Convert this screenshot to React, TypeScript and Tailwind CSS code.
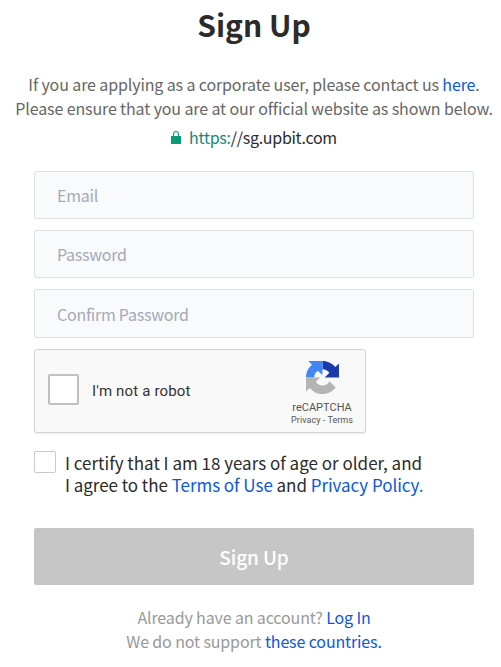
import type { ReactNode } from 'react'

const inputs = [
  { name: 'email', type: 'email', label: 'Email', size: 'h-12' },
  { name: 'password', type: 'password', label: 'Password', size: 'h-12' },
  { name: 'confirm', type: 'password', label: 'Confirm Password', size: 'h-[49px]' },
]

function TextLink({ children }: { children: ReactNode }) {
  return (
    <a href="#" className="text-[#0b57df]">
      {children}
    </a>
  )
}

function LockIcon() {
  return (
    <svg className="h-[13px] w-[10px]" viewBox="0 0 10 13" fill="none">
      <path d="M2.5 6V3a2.5 2.5 0 0 1 5 0v3" stroke="#089b78" strokeWidth="1.1" />
      <rect y="5" width="10" height="8" rx="0.5" fill="#089b78" />
    </svg>
  )
}

function RecaptchaLogo() {
  return (
    <svg className="h-[33px] w-[33px]" viewBox="0 0 64 64">
      <path fill="#1c3aa9" d="M64 31.955a33 33 0 0 0-.038-1.367V4.615l-7.18 7.18C50.905 4.602 41.965 0 31.949 0v15.926a17 17 0 0 1 13.345 6.993l-9.036 9.036H64z" />
      <path fill="#4285f4" d="M31.862.001a33 33 0 0 0-1.367.037H4.522l7.18 7.18C4.509 13.095 0 22.035 0 32.051h15.833a17 17 0 0 1 6.993-13.345l9.036 9.036V.001z" />
      <path fill="#b4b4b4" d="M.001 32.045q.002.69.037 1.367v25.973l7.18-7.18C13.095 59.398 22.035 64 32.051 64c10.423 0 19.682-4.984 25.518-12.702L45.8 39.405a16 16 0 0 1-4.767 5.35c-2.06 1.608-4.98 2.922-8.982 2.922-.483 0-.857-.057-1.131-.163-4.959-.392-9.258-3.129-11.789-7.101l8.33-8.33z" />
    </svg>
  )
}

function Recaptcha() {
  return (
    <div className="mt-[11px] flex h-[84px] w-[332px] items-start justify-between rounded-[3px] border border-[#d3d3d3] bg-[#f9f9f9] pr-3 pl-[13px] font-[Roboto,sans-serif] shadow-[0_1px_2px_rgba(0,0,0,0.08)]">
      <div className="mt-6 flex items-center">
        <span className="h-[31px] w-[31px] rounded-[2px] border-2 border-[#c1c1c1] bg-white" />
        <span className="mt-[3px] ml-[13px] text-[15px] tracking-[0.16px] text-[#333]">I'm not a robot</span>
      </div>
      <div className="mt-[11px] flex flex-col items-center text-[#555]">
        <RecaptchaLogo />
        <span className="mt-[7px] text-[11px] leading-[13px]">reCAPTCHA</span>
        <span className="text-[9px] leading-[12px] tracking-[0.05px]">Privacy - Terms</span>
      </div>
    </div>
  )
}

export default function App() {
  return (
    <main className="h-[667px] overflow-hidden bg-white pl-[7px] font-['Noto_Sans_CJK_KR',sans-serif] text-[#2b2b2b]">
      <header className="text-center">
        <h1 className="pt-[3px] text-[30px] leading-[42px] font-bold">Sign Up</h1>
        <div className="mt-[27px] text-base leading-6 tracking-[-0.12px] whitespace-nowrap text-[#666]">
          <p>
            If you are applying as a corporate user, please contact us <TextLink>here</TextLink>.
          </p>
          <p>Please ensure that you are at our official website as shown below.</p>
        </div>
        <p className="mt-[5px] flex items-center justify-center gap-2 text-base leading-6 tracking-[-0.28px]">
          <LockIcon />
          <span>
            <span className="text-[#168873]">https:</span>//sg.upbit.com
          </span>
        </p>
      </header>

      <form className="mx-[27px] mt-[22px]">
        <div className="flex flex-col gap-[11px]">
          {inputs.map((input) => (
            <input
              key={input.name}
              type={input.type}
              placeholder={input.label}
              className={`${input.size} w-[440px] rounded-[2px] border border-[#dfe1e6] bg-[#f9fafc] px-[22px] text-base tracking-[-0.25px] placeholder:text-[#a4a9b8]`}
            />
          ))}
        </div>

        <Recaptcha />

        <label className="mt-[18px] flex items-start">
          <span className="h-[22px] w-[22px] rounded-[2px] border border-[#c8c9d3] bg-white" />
          <span className="mt-px ml-[9px] text-[17px] leading-[22px] whitespace-nowrap">
            I certify that I am 18 years of age or older, and
            <br />
            <span className="tracking-[-0.04px]">
              I agree to the <TextLink>Terms of Use</TextLink> and <TextLink>Privacy Policy.</TextLink>
            </span>
          </span>
        </label>

        <button
          type="button"
          className="mt-8 block h-[57px] w-[440px] rounded-[2px] bg-[#c6c6c6] pt-[2px] text-[19px] font-medium tracking-[-0.1px] text-white"
        >
          Sign Up
        </button>
      </form>

      <footer className="mt-5 text-center text-base leading-6 tracking-[-0.13px] text-[#999]">
        <p>
          Already have an account? <TextLink>Log In</TextLink>
        </p>
        <p>
          We do not support <TextLink>these countries.</TextLink>
        </p>
      </footer>
    </main>
  )
}
